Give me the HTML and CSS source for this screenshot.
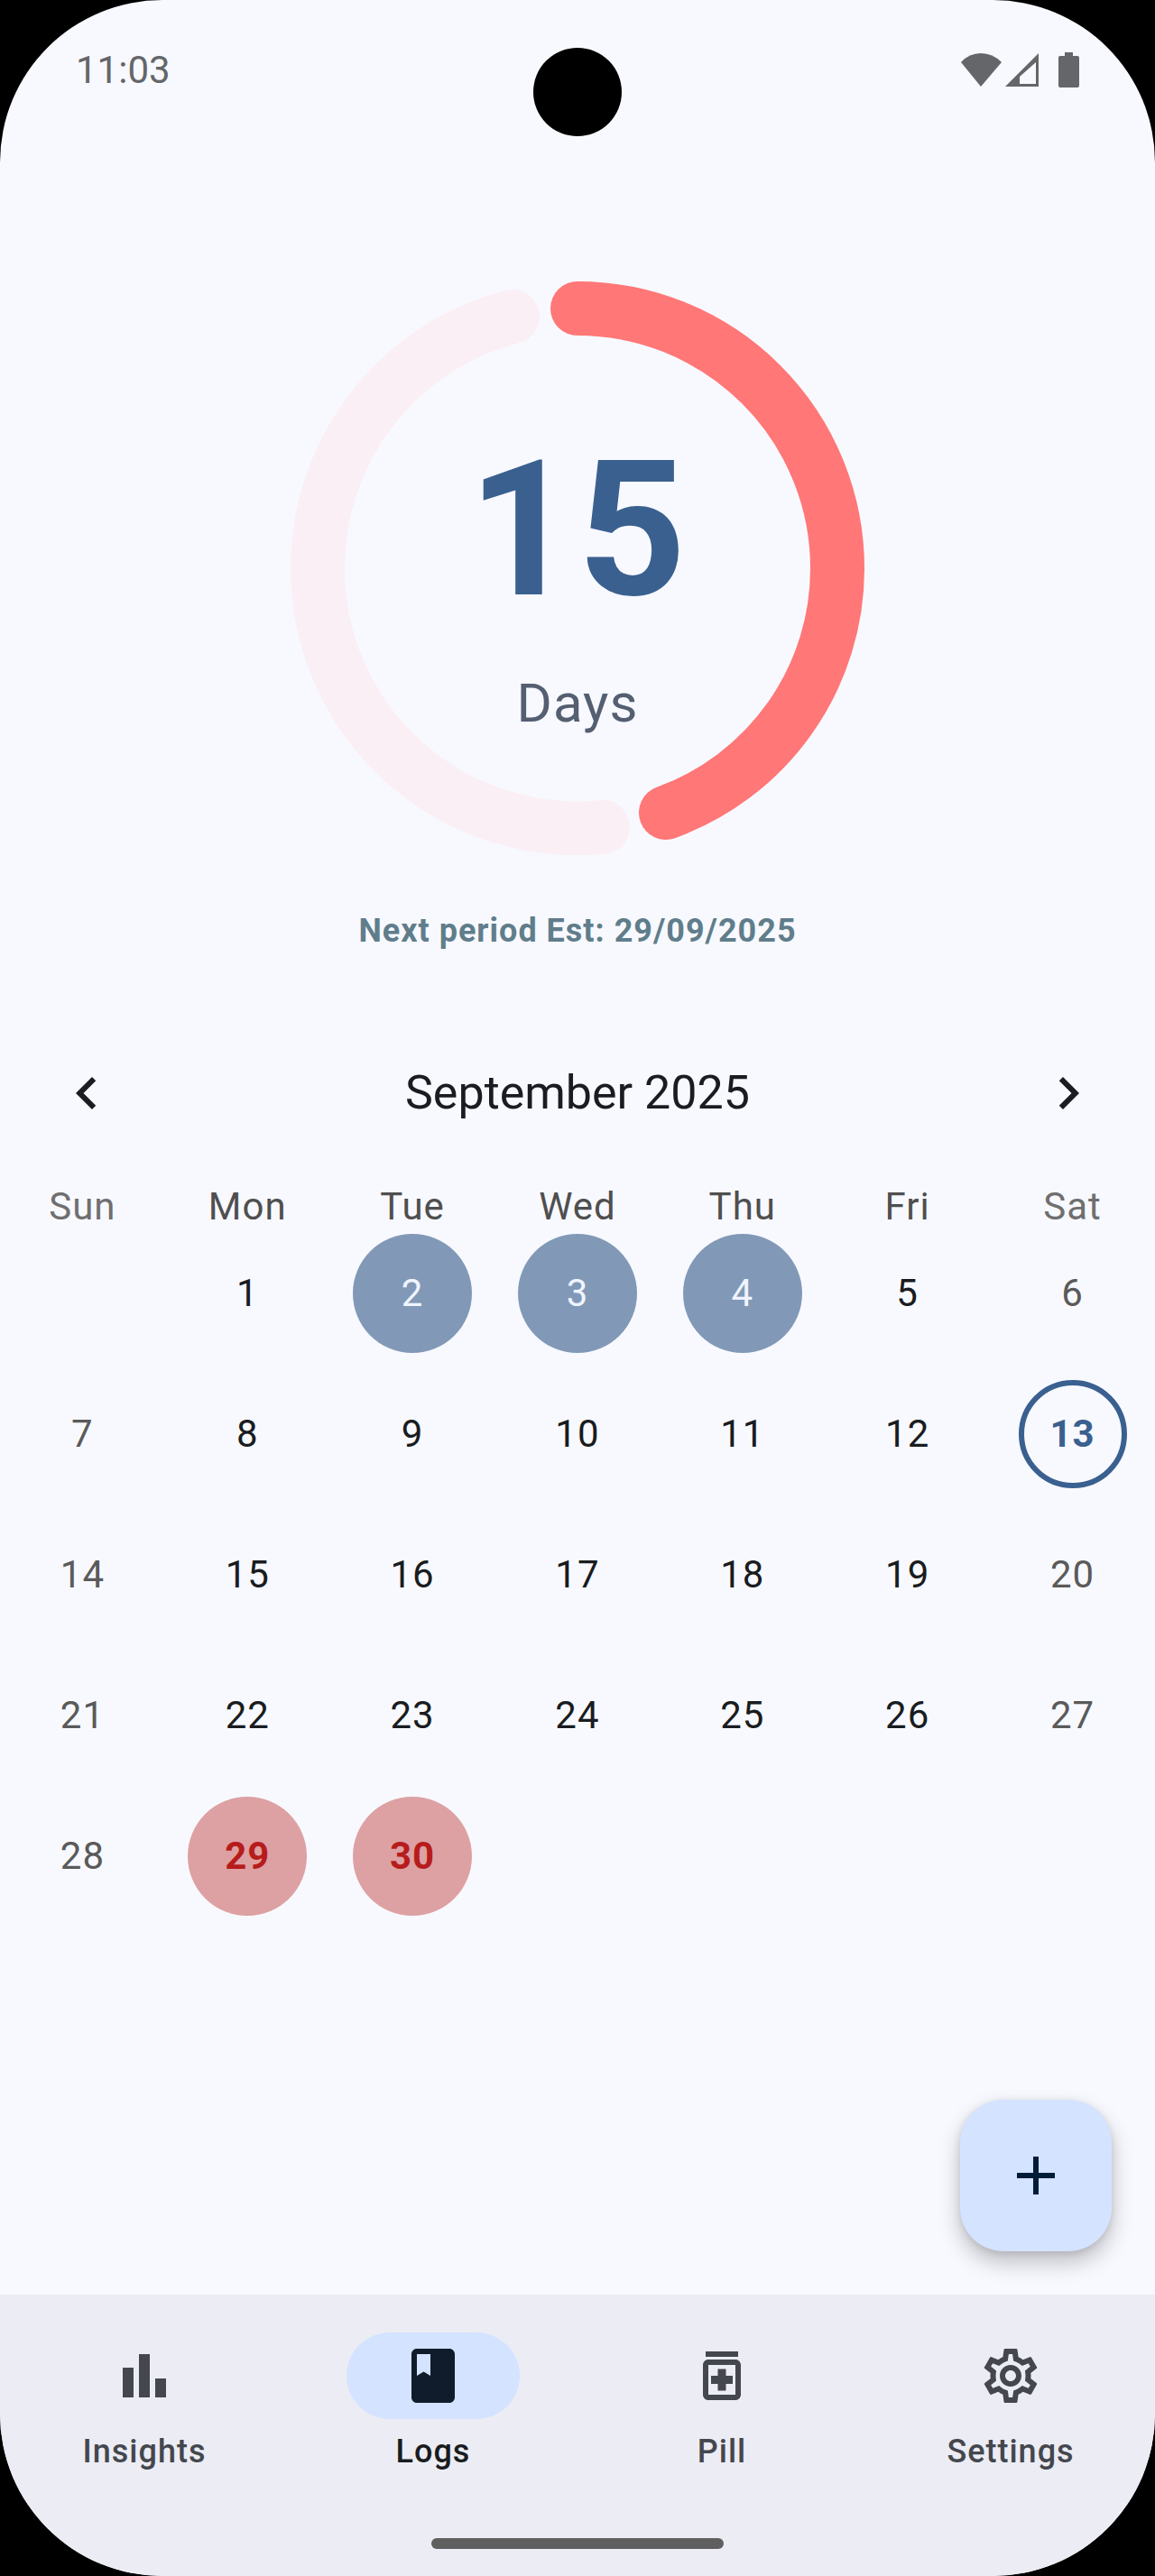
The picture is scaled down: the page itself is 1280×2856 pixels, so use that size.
FILE: index.html
```html
<!DOCTYPE html>
<html lang="en">
<head>
<meta charset="utf-8">
<meta name="viewport" content="width=device-width, initial-scale=1">
<title>Logs</title>
<link rel="stylesheet" href="styles.css">
</head>
<body>
<div class="screen">
  <header class="status-bar">
    <span class="clock">11:03</span>
    <span class="camera"></span>
    <svg class="status-icons" viewBox="0 0 132 40" aria-hidden="true">
      <path d="M1 11Q10 1 23 1T46 11L23 38z"/>
      <path fill-rule="evenodd" d="M87 1v37H50zM84 11L66 27v8h18z"/>
      <path d="M116 0h9v4h5a2 2 0 0 1 2 2v31a2 2 0 0 1-2 2h-19a2 2 0 0 1-2-2V6a2 2 0 0 1 2-2h5z"/>
    </svg>
  </header>

  <main class="content">
    <section class="cycle">
      <div class="ring">
        <svg class="ring-art" viewBox="0 0 636 636" aria-hidden="true">
          <path class="ring-rest" d="M346 605A288 288 0 0 1 30 318A288 288 0 0 1 246 39"/>
          <path class="ring-done" d="M318 30A288 288 0 0 1 606 318A288 288 0 0 1 416 589"/>
        </svg>
        <div class="ring-text">
          <strong class="ring-count">15</strong>
          <span class="ring-unit">Days</span>
        </div>
      </div>
      <p class="estimate">Next period Est: 29/09/2025</p>
    </section>

    <section class="calendar">
      <div class="month-bar">
        <button class="icon-button" type="button" aria-label="Previous month"><svg class="icon" viewBox="0 0 24 24"><path d="M15.41 7.41 14 6l-6 6 6 6 1.41-1.41L10.83 12z"/></svg></button>
        <h1 class="month">September 2025</h1>
        <button class="icon-button" type="button" aria-label="Next month"><svg class="icon" viewBox="0 0 24 24"><path d="M10 6 8.59 7.41 13.17 12l-4.58 4.59L10 18l6-6z"/></svg></button>
      </div>
      <table class="days">
        <thead>
          <tr><th class="weekend">Sun</th><th>Mon</th><th>Tue</th><th>Wed</th><th>Thu</th><th>Fri</th><th class="weekend">Sat</th></tr>
        </thead>
        <tbody>
          <tr><td></td><td>1</td><td><span class="mark logged">2</span></td><td><span class="mark logged">3</span></td><td><span class="mark logged">4</span></td><td>5</td><td class="weekend">6</td></tr>
          <tr><td class="weekend">7</td><td>8</td><td>9</td><td>10</td><td>11</td><td>12</td><td><span class="mark today">13</span></td></tr>
          <tr><td class="weekend">14</td><td>15</td><td>16</td><td>17</td><td>18</td><td>19</td><td class="weekend">20</td></tr>
          <tr><td class="weekend">21</td><td>22</td><td>23</td><td>24</td><td>25</td><td>26</td><td class="weekend">27</td></tr>
          <tr><td class="weekend">28</td><td><span class="mark predicted">29</span></td><td><span class="mark predicted">30</span></td><td></td><td></td><td></td><td></td></tr>
        </tbody>
      </table>
    </section>

    <button class="fab" type="button" aria-label="Add log"><svg class="icon" viewBox="0 0 24 24"><path d="M19 13h-6v6h-2v-6H5v-2h6V5h2v6h6z"/></svg></button>
  </main>

  <footer class="bottom">
    <nav class="nav">
      <a class="nav-item" href="#insights">
        <span class="nav-icon"><svg class="icon" viewBox="0 0 24 24"><path d="M4 9h4v11H4zM16 13h4v7h-4zM10 4h4v16h-4z"/></svg></span>
        Insights
      </a>
      <a class="nav-item active" href="#logs" aria-current="page">
        <span class="nav-icon"><svg class="icon" viewBox="0 0 24 24"><path d="M18 2H6c-1.1 0-2 .9-2 2v16c0 1.1.9 2 2 2h12c1.1 0 2-.9 2-2V4c0-1.1-.9-2-2-2zM6 4h5v8l-2.5-1.5L6 12z"/></svg></span>
        Logs
      </a>
      <a class="nav-item" href="#pill">
        <span class="nav-icon"><svg class="icon" viewBox="0 0 24 24"><path d="M6 3h12v2H6zM17 6H7c-1.1 0-2 .9-2 2v11c0 1.1.9 2 2 2h10c1.1 0 2-.9 2-2V8c0-1.1-.9-2-2-2zm0 13H7V8h10zM10.5 17.5h3V15H16v-3h-2.5V9.5h-3V12H8v3h2.5z"/></svg></span>
        Pill
      </a>
      <a class="nav-item" href="#settings">
        <span class="nav-icon"><svg class="icon" viewBox="0 0 24 24"><path d="M19.43 12.98c.04-.32.07-.64.07-.98 0-.34-.03-.66-.07-.98l2.11-1.65c.19-.15.24-.42.12-.64l-2-3.46c-.09-.16-.26-.25-.44-.25-.06 0-.12.01-.17.03l-2.49 1c-.52-.4-1.08-.73-1.69-.98l-.38-2.65C14.46 2.18 14.25 2 14 2h-4c-.25 0-.46.18-.49.42l-.38 2.65c-.61.25-1.17.59-1.69.98l-2.49-1c-.06-.02-.12-.03-.18-.03-.17 0-.34.09-.43.25l-2 3.46c-.13.22-.07.49.12.64l2.11 1.65c-.04.32-.07.65-.07.98 0 .33.03.66.07.98l-2.11 1.65c-.19.15-.24.42-.12.64l2 3.46c.09.16.26.25.44.25.06 0 .12-.01.17-.03l2.49-1c.52.4 1.08.73 1.69.98l.38 2.65c.03.24.24.42.49.42h4c.25 0 .46-.18.49-.42l.38-2.65c.61-.25 1.17-.59 1.69-.98l2.49 1c.06.02.12.03.18.03.17 0 .34-.09.43-.25l2-3.46c.12-.22.07-.49-.12-.64l-2.11-1.65zm-1.98-1.71c.04.31.05.52.05.73 0 .21-.02.43-.05.73l-.14 1.13.89.7 1.08.84-.7 1.21-1.27-.51-1.04-.42-.9.68c-.43.32-.84.56-1.25.73l-1.06.43-.16 1.13-.2 1.35h-1.4l-.19-1.35-.16-1.13-1.06-.43c-.43-.18-.83-.41-1.23-.71l-.91-.7-1.06.43-1.27.51-.7-1.21 1.08-.84.89-.7-.14-1.13c-.03-.31-.05-.54-.05-.74s.02-.43.05-.73l.14-1.13-.89-.7-1.08-.84.7-1.21 1.27.51 1.04.42.9-.68c.43-.32.84-.56 1.25-.73l1.06-.43.16-1.13.2-1.35h1.39l.19 1.35.16 1.13 1.06.43c.43.18.83.41 1.23.71l.91.7 1.06-.43 1.27-.51.7 1.21-1.07.85-.89.7.14 1.13zM12 8c-2.21 0-4 1.79-4 4s1.79 4 4 4 4-1.79 4-4-1.79-4-4-4zm0 6c-1.1 0-2-.9-2-2s.9-2 2-2 2 .9 2 2-.9 2-2 2z"/></svg></span>
        Settings
      </a>
    </nav>
    <div class="home-bar"></div>
  </footer>
</div>
</body>
</html>
```
FILE: styles.css
```css
* {
  box-sizing: border-box;
}

body {
  margin: 0;
  background: #000;
  color: #191c20;
  font-family: Roboto, sans-serif;
  font-size: 42px;
  line-height: 60px;
  letter-spacing: 1px;
}

button {
  border: 0;
  padding: 0;
  background: none;
  color: inherit;
  font: inherit;
}

.screen {
  display: flex;
  flex-direction: column;
  min-height: 100vh;
  border-radius: 180px;
  overflow: hidden;
  background: #f8f9ff;
}

.icon {
  display: block;
  width: 72px;
  height: 72px;
  fill: currentColor;
}

/* Status bar */
.status-bar {
  display: grid;
  grid-template-columns: 1fr auto 1fr;
  align-items: center;
  height: 156px;
  padding: 0 84px;
  color: #646669;
}

.clock {
  letter-spacing: 0;
}

.camera {
  width: 98px;
  height: 98px;
  margin-top: 48px;
  border-radius: 50%;
  background: #000;
}

.status-icons {
  justify-self: end;
  width: 132px;
  height: 40px;
  fill: currentColor;
}

/* Cycle ring */
.content {
  display: flex;
  flex: 1;
  flex-direction: column;
}

.cycle {
  display: flex;
  flex-direction: column;
  align-items: center;
  gap: 54px;
  padding-top: 156px;
}

.ring {
  display: grid;
  place-items: center;
  width: 636px;
}

.ring-art,
.ring-text {
  grid-area: 1 / 1;
}

.ring-art {
  width: 100%;
  fill: none;
  stroke-width: 60;
  stroke-linecap: round;
}

.ring-rest {
  stroke: #faeff4;
}

.ring-done {
  stroke: #ff7777;
}

.ring-text {
  display: flex;
  flex-direction: column;
  align-items: center;
  gap: 22px;
  padding-top: 32px;
}

.ring-count {
  color: #3a608f;
  font-size: 210px;
  line-height: 246px;
}

.ring-unit {
  color: #545f71;
  font-size: 60px;
  line-height: 96px;
}

.estimate {
  margin: 0;
  color: #607d8b;
  font-size: 36px;
  font-weight: 700;
}

/* Calendar */
.calendar {
  padding-top: 42px;
}

.month-bar {
  display: flex;
  align-items: center;
  justify-content: space-between;
  height: 216px;
  padding: 0 60px;
}

.month {
  margin: 0;
  font-size: 52px;
  font-weight: 400;
  letter-spacing: 0;
}

.days {
  width: 100%;
  table-layout: fixed;
  border-collapse: collapse;
  text-align: center;
}

.days th {
  height: 36px;
  padding: 0;
  color: #4f4f4f;
  font-weight: 400;
  line-height: 36px;
}

.days th.weekend {
  color: #6f6f6f;
}

.days td {
  height: 156px;
  padding: 0;
}

.days td.weekend {
  color: #5a5a5a;
}

.mark {
  display: flex;
  align-items: center;
  justify-content: center;
  width: 132px;
  height: 132px;
  margin: 0 auto;
  border-radius: 50%;
}

.logged {
  background: #8199b7;
  color: #f0f4ff;
}

.predicted {
  background: #dda1a3;
  color: #b71c1c;
  font-weight: 700;
}

.today {
  width: 120px;
  height: 120px;
  border: 6px solid #3a608f;
  color: #3a608f;
  font-weight: 700;
}

.fab {
  display: grid;
  place-items: center;
  width: 168px;
  height: 168px;
  margin: auto 48px 48px auto;
  border-radius: 48px;
  background: #d4e3ff;
  box-shadow: 0 12px 24px rgb(0 0 0 / 24%), 0 2px 8px rgb(0 0 0 / 10%);
  color: #001c38;
}

/* Bottom navigation */
.bottom {
  display: flex;
  flex-direction: column;
  align-items: center;
  gap: 30px;
  padding: 42px 0 30px;
  background: #ecedf4;
}

.nav {
  display: grid;
  grid-template-columns: repeat(4, 1fr);
  width: 100%;
}

.nav-item {
  display: flex;
  flex-direction: column;
  align-items: center;
  gap: 6px;
  height: 198px;
  color: #44474e;
  font-size: 36px;
  font-weight: 500;
  text-decoration: none;
}

.nav-icon {
  display: grid;
  place-items: center;
  width: 192px;
  height: 96px;
  border-radius: 48px;
}

.active {
  color: #191c20;
}

.active .nav-icon {
  background: #d4e3ff;
  color: #101c2b;
}

.home-bar {
  width: 324px;
  height: 12px;
  border-radius: 6px;
  background: #5f5f5f;
}
```
